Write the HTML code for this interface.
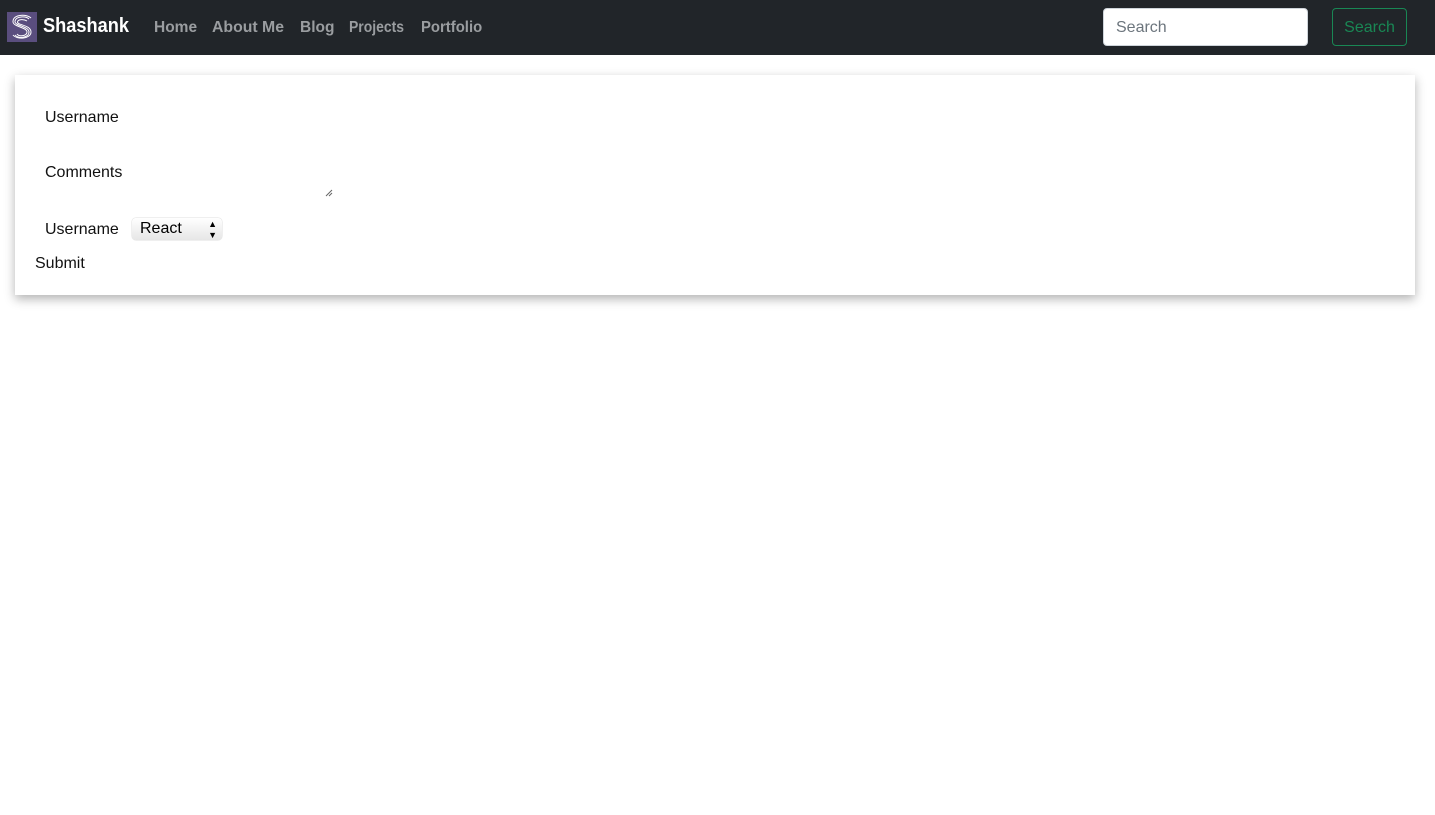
<!DOCTYPE html>
<html><head><meta charset="utf-8"><style>
body{margin:0;background:#fff;font-family:"Liberation Sans",sans-serif;}
nav{height:55px;background:#212529;position:relative;}
.logo{position:absolute;left:7px;top:12px;width:30px;height:30px;background:#5a4e7e;}
.brand{position:absolute;left:43px;top:15px;color:#fff;font-size:20px;font-weight:bold;transform:scaleX(.91);transform-origin:left;}
.l{position:absolute;top:19px;font-size:15.5px;font-weight:bold;color:#9a9da0;transform-origin:left;}
.sin{position:absolute;left:1103px;top:8px;width:205px;height:38px;background:#fff;border:1px solid #ced4da;border-radius:4px;box-sizing:border-box;padding:10px 12px;color:#6c757d;font-size:16px;}
.sbtn{position:absolute;left:1332px;top:8px;width:75px;height:38px;border:1px solid #198754;border-radius:4px;box-sizing:border-box;color:#198754;font-size:16px;text-align:center;line-height:37px;}
.card{position:absolute;left:15px;top:75px;width:1400px;height:220px;background:#fff;box-shadow:0 4px 10px rgba(0,0,0,.3);}
.t{position:absolute;font-size:16px;color:#111;}
.sel{position:absolute;left:132px;top:218px;width:90px;height:22px;border-radius:4px;background:linear-gradient(#fff,#e6e6e6);box-shadow:0 0 1px #999;font-size:16px;line-height:22px;padding-left:8px;box-sizing:border-box;}
</style></head><body>
<nav>
<div class="logo"><svg width="30" height="30" viewBox="0 0 30 30" fill="none" stroke="#fff" stroke-width="1"><path d="M22 7C19 4 9 4 8 9C7 14 22 14 22 20C22 26 11 27 8 23"/><path d="M20 9C17 7 11 7 10.5 10C10 13 24 13 24 20C24 27 10 28 6 23"/><path d="M24 6C20 2 7 2 6 9C5 15 20 15 20 20C20 24 12 25 10 22"/></svg></div>
<div class="brand">Shashank</div>
<div class="l" style="left:154px">Home</div>
<div class="l" style="left:212px;transform:scaleX(1.02)">About Me</div>
<div class="l" style="left:300px">Blog</div>
<div class="l" style="left:349px;transform:scaleX(.9)">Projects</div>
<div class="l" style="left:421px;transform:scaleX(.96)">Portfolio</div>
<div class="sin">Search</div>
<div class="sbtn">Search</div>
</nav>
<div class="card"></div>
<div class="t" style="left:45px;top:109px">Username</div>
<div class="t" style="left:45px;top:164px">Comments</div>
<svg style="position:absolute;left:325px;top:189px" width="8" height="8"><path d="M1 7L7 1M4 7L7 4" stroke="#666"/></svg>
<div class="t" style="left:45px;top:221px">Username</div>
<div class="sel">React<span style="position:absolute;right:5px;font-size:9px;line-height:11px;top:1px">▲<br>▼</span></div>
<div class="t" style="left:35px;top:255px">Submit</div>
</body></html>
